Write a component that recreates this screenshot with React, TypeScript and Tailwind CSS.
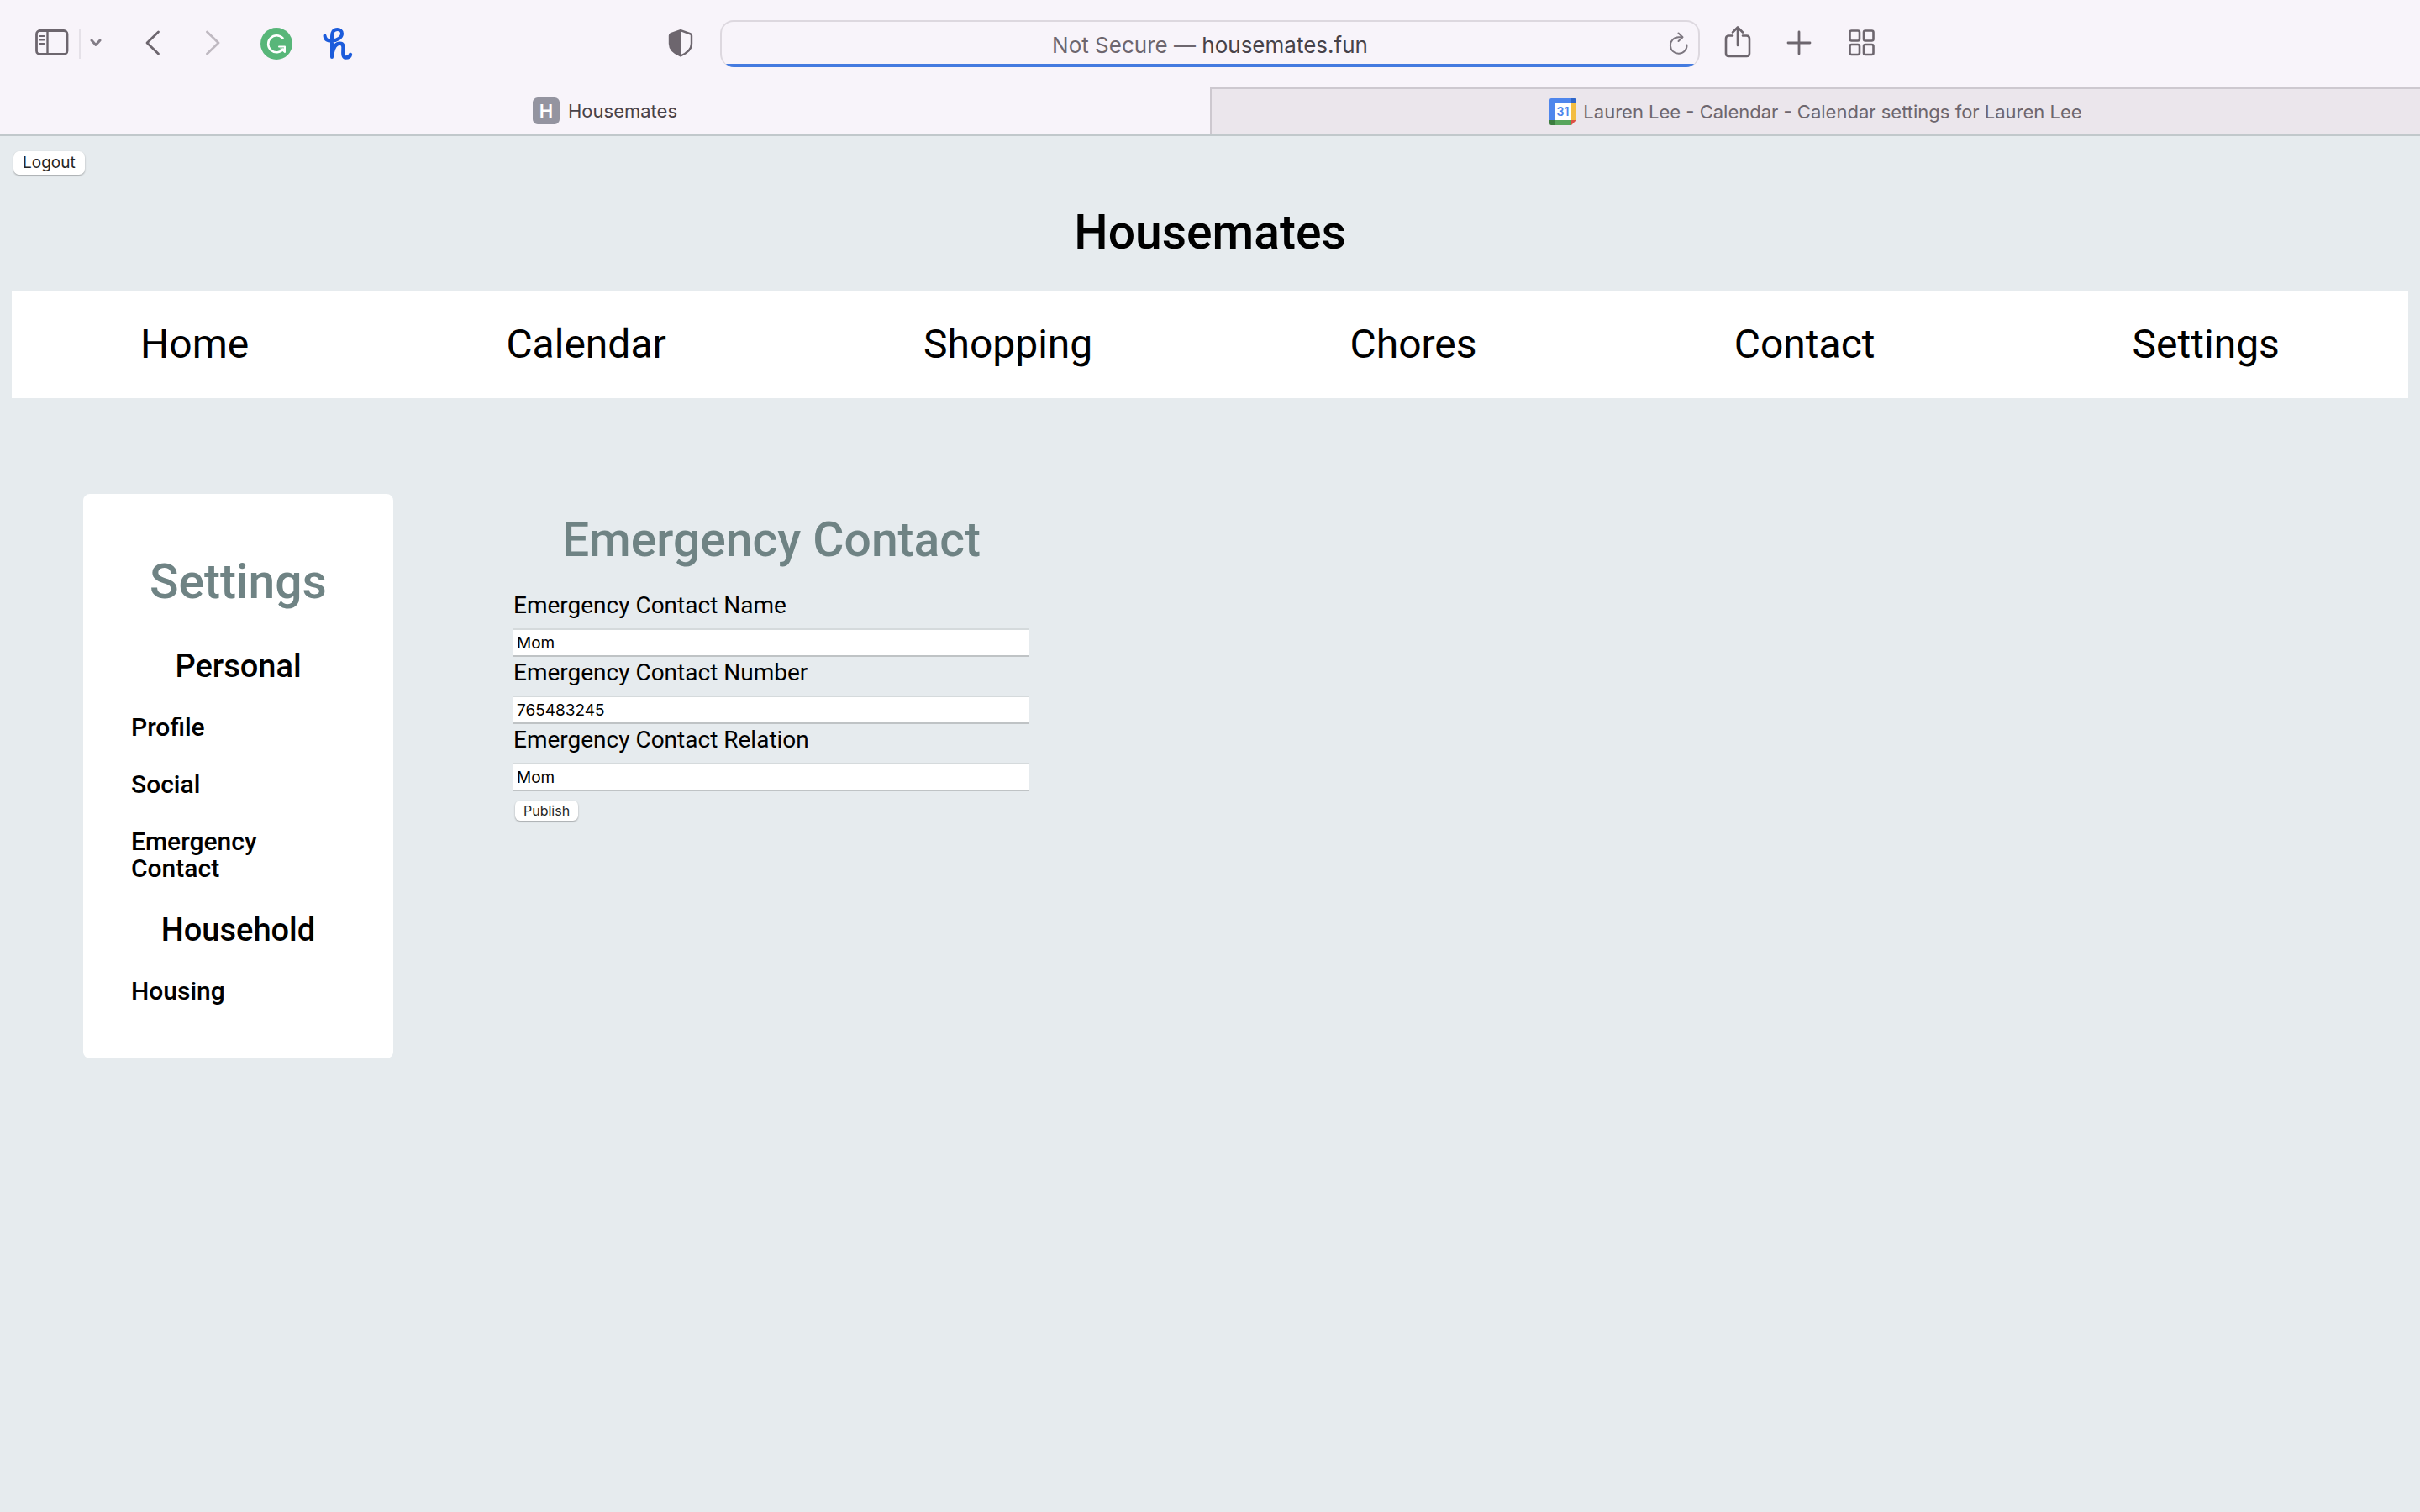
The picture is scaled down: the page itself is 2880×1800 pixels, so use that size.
import React from "react";

const navItems = ["Home", "Calendar", "Shopping", "Chores", "Contact", "Settings"];

const fields = [
  { id: "name", label: "Emergency Contact Name", value: "Mom" },
  { id: "number", label: "Emergency Contact Number", value: "765483245" },
  { id: "relation", label: "Emergency Contact Relation", value: "Mom" },
];

function SidebarIcon() {
  return (
    <svg width="40" height="32" viewBox="0 0 40 32" fill="none" stroke="#6d666e">
      <rect x="1.5" y="1.5" width="36.5" height="28" rx="4" strokeWidth="2.8" />
      <path d="M14.5 2v27" strokeWidth="2.4" />
      <path d="M5.5 8h5M5.5 12.5h5M5.5 17h5" strokeWidth="1.8" strokeLinecap="round" />
    </svg>
  );
}

function GrammarlyIcon() {
  return (
    <svg width="38" height="38" viewBox="0 0 38 38" fill="none" stroke="#fff" strokeLinecap="round" strokeLinejoin="round">
      <circle cx="19" cy="19" r="19" fill="#58b679" stroke="none" />
      <path d="M26.5 12.5A10 10 0 1 0 27 25.5" strokeWidth="2.6" />
      <path d="M22 22.5H29V29L24.5 25" strokeWidth="2" />
    </svg>
  );
}

function HoneyIcon() {
  return (
    <svg width="36" height="38" viewBox="0 0 36 38" fill="none" stroke="#1c5bdb" strokeLinecap="round" strokeLinejoin="round">
      <path d="M2.5 9.5C3 14.500 6 16 11 15.5C18 15 23 11.500 23 7C23 3.500 20.500 2 17.500 2C13 2 11 5.500 11 10V35" strokeWidth="4" />
      <path d="M11.5 30C13 23 16.5 18.8 20.500 18.8C24.500 18.8 24.8 22 24.500 26C24.200 31 24 35.500 27.5 35.500C30.5 35.500 32.5 34 33 32" strokeWidth="4.5" />
    </svg>
  );
}

function Toolbar() {
  return (
    <div className="flex h-[104px] items-start bg-[#f8f4fa] text-[#6d666e]">
      <div className="flex h-[104px] flex-1 items-start pl-[42px]">
        <button aria-label="Toggle sidebar" className="mt-[35px]"><SidebarIcon /></button>
        <span className="mt-[34px] ml-3 h-9 w-0.5 bg-[#e5e1e8]" />
        <button aria-label="Tab groups" className="mt-[46px] ml-[11px]">
          <svg width="14" height="10" viewBox="0 0 14 10" fill="none" stroke="#837d87" strokeWidth="3" strokeLinecap="round" strokeLinejoin="round"><path d="M2 2l5 5.5L12 2" /></svg>
        </button>
        <button aria-label="Back" className="mt-9 ml-[52px]">
          <svg width="18" height="30" viewBox="0 0 18 30" fill="none" stroke="#6d666e" strokeWidth="2.8" strokeLinecap="round" strokeLinejoin="round"><path d="M15.5 2L2 15l13.5 13" /></svg>
        </button>
        <button aria-label="Forward" className="mt-9 ml-[53px]">
          <svg width="18" height="30" viewBox="0 0 18 30" fill="none" stroke="#bfb9c1" strokeWidth="2.8" strokeLinecap="round" strokeLinejoin="round"><path d="M2.5 2L16 15L2.5 28" /></svg>
        </button>
        <button aria-label="Grammarly" className="mt-[33px] ml-12"><GrammarlyIcon /></button>
        <button aria-label="Honey" className="mt-[33px] ml-9"><HoneyIcon /></button>
        <button aria-label="Privacy report" className="mt-[34px] mr-8 ml-auto">
          <svg width="30" height="34" viewBox="0 0 30 34" fill="none">
            <path d="M15 2.2L27 6.5Q28 7 28 8.5V18C28 25 22 29.5 15 32.5C8 29.5 2 25 2 18V8.5Q2 7 3 6.5Z" stroke="#6d666e" strokeWidth="2.4" strokeLinejoin="round" />
            <path d="M15 2.2L3 6.5Q2 7 2 8.5V18C2 25 8 29.5 15 32.5Z" fill="#6d666e" />
          </svg>
        </button>
      </div>
      <div className="relative mt-6 flex h-14 w-[1166px] items-center justify-center overflow-hidden rounded-[16px] border-2 border-b-0 border-[#ddd8df] text-[26px]">
        <span className="whitespace-pre text-[#6d666e]">Not Secure — <span className="text-[#474249]">housemates.fun</span></span>
        <button aria-label="Reload" className="absolute top-3 right-[11px]">
          <svg width="24" height="28" viewBox="0 0 24 28" fill="none" stroke="#7d7780" strokeWidth="2" strokeLinecap="round" strokeLinejoin="round">
            <path d="M21.5 15.5A9.8 9.8 0 1 1 11.700 6.200H16" /><path d="M11.5 1.5l5 4.700l-5 4.800" />
          </svg>
        </button>
        <span className="absolute inset-x-0 bottom-0 h-1 bg-[#447be0]" />
      </div>
      <div className="flex flex-1 items-start pr-[13px] pl-[29px]">
        <button aria-label="Share" className="mt-[30px]">
          <svg width="32" height="40" viewBox="0 0 32 40" fill="none" stroke="#6d666e" strokeWidth="2.6" strokeLinecap="round" strokeLinejoin="round"><path d="M10 12.5H5.5Q2 12.5 2 16V33.5Q2 37 5.5 37H26.5Q30 37 30 33.5V16Q30 12.5 26.5 12.5H22M16 24V2.5M10 8.500l6-6l6 6" /></svg>
        </button>
        <button aria-label="New tab" className="mt-9 ml-[42px]">
          <svg width="30" height="30" viewBox="0 0 30 30" stroke="#6d666e" strokeWidth="2.8" strokeLinecap="round"><path d="M2 15H28M15 2V28" /></svg>
        </button>
        <button aria-label="Tab overview" className="mt-[35px] ml-[44px]">
          <svg width="32" height="32" viewBox="0 0 32 32" fill="none" stroke="#6d666e" strokeWidth="2.6"><rect x="1.5" y="1.5" width="11.5" height="12" rx="2" /><rect x="18" y="1.5" width="11.5" height="12" rx="2" /><rect x="1.5" y="18" width="11.5" height="12" rx="2" /><rect x="18" y="18" width="11.5" height="12" rx="2" /></svg>
        </button>
      </div>
    </div>
  );
}

function TabBar() {
  return (
    <div className="grid h-[58px] grid-cols-2 border-b-2 border-[#c1c8cb] bg-[#f8f4fa] text-[22px]">
      <button className="flex items-center justify-center gap-[10px] text-[#474249]">
        <span className="flex size-8 items-center justify-center rounded-md bg-[#9494a0] text-[22px] font-semibold text-white">H</span>
        Housemates
      </button>
      <button className="flex items-center justify-center gap-2 border-t-2 border-l-2 border-[#cdc8cf] bg-[#ebe6ec] text-[#6d666e]">
        <svg width="32" height="32" viewBox="0 0 32 32">
          <path d="M2 0H26V6H6V26H0V2Q0 0 2 0Z" fill="#4f86ec" />
          <path d="M26 0H30Q32 0 32 2V6H26Z" fill="#2f66c9" />
          <path d="M26 6H32V26H26Z" fill="#f3bd42" />
          <path d="M6 26H26V32H6Z" fill="#58a55c" />
          <path d="M0 26H6V32H2Q0 32 0 30Z" fill="#3c7d40" />
          <path d="M26 26H32L26 32Z" fill="#de5145" />
          <path d="M6 6H26V26H6Z" fill="#fff" />
          <text x="16" y="21" textAnchor="middle" fontSize="14" fontWeight="600" fill="#4f86ec">31</text>
        </svg>
        Lauren Lee - Calendar - Calendar settings for Lauren Lee
      </button>
    </div>
  );
}

function SideLink({ children }: { children: React.ReactNode }) {
  return <a href="#" className="mb-9 block text-[30px] leading-8 font-medium">{children}</a>;
}

function Settings() {
  return (
    <aside className="w-[369px] rounded-lg bg-white px-[57px] pt-[72px] pb-7">
      <h2 className="mb-[46px] text-center text-[57px] leading-[66px] font-medium text-[#6f8384]">Settings</h2>
      <h3 className="mb-9 text-center text-[38px] leading-[42px] font-medium">Personal</h3>
      <SideLink>Profile</SideLink>
      <SideLink>Social</SideLink>
      <SideLink>Emergency Contact</SideLink>
      <h3 className="mb-9 text-center text-[38px] leading-[42px] font-medium">Household</h3>
      <SideLink>Housing</SideLink>
    </aside>
  );
}

function ContactForm() {
  return (
    <form className="flex w-[614px] flex-col pt-[22px]" onSubmit={(e) => e.preventDefault()}>
      <h2 className="mb-[26px] text-center text-[57px] leading-[66px] font-medium text-[#6f8384]">Emergency Contact</h2>
      {fields.map((f) => (
        <div key={f.id} className="flex flex-col">
          <label htmlFor={f.id} className="mb-2 text-[28px] leading-[38px]">{f.label}</label>
          <input id={f.id} defaultValue={f.value} className="h-[34px] border-t-2 border-b-2 border-t-[#d5dadc] border-b-[#bfc3c5] bg-white px-1 font-['Inter'] text-[19px] outline-none" />
        </div>
      ))}
      <button className="mt-[11px] ml-0.5 h-6 self-start rounded-[6px] bg-white px-[10px] font-['Inter'] text-[16px] leading-6 text-[#262626] shadow-[0_1px_2px_#00000050]">Publish</button>
    </form>
  );
}

export default function App() {
  return (
    <div className="min-h-screen bg-[#e6ebee] font-['Roboto',sans-serif] text-black">
      <header className="font-['Inter',sans-serif]">
        <Toolbar />
        <TabBar />
      </header>
      <main className="px-[14px] pt-[18px]">
        <button className="ml-0.5 block h-7 rounded-[7px] bg-white px-[11px] font-['Inter'] text-[19px] leading-7 text-[#262626] shadow-[0_1px_2px_#00000050]">Logout</button>
        <h1 className="mt-9 mb-9 text-center text-[57px] leading-[66px] font-medium">Housemates</h1>
        <nav className="flex h-32 items-center justify-around bg-white text-[48px]">
          {navItems.map((n) => <a key={n} href="#">{n}</a>)}
        </nav>
        <div className="mt-[114px] flex items-start gap-[143px] pl-[85px]">
          <Settings />
          <ContactForm />
        </div>
      </main>
    </div>
  );
}
